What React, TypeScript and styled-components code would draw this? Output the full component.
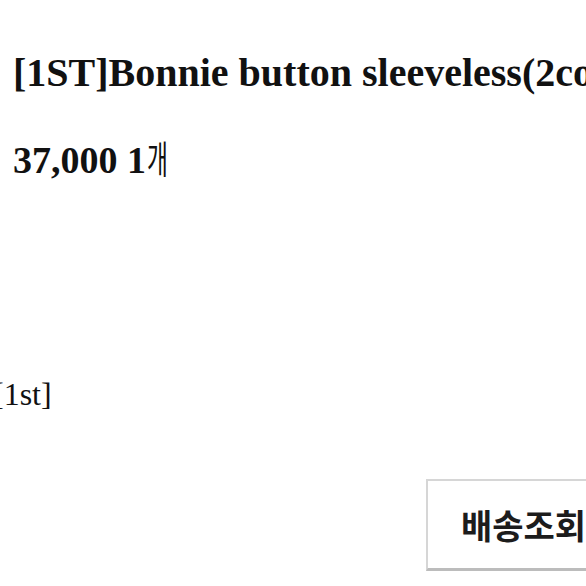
import React from 'react';
import styled, { createGlobalStyle } from 'styled-components';

const GlobalStyle = createGlobalStyle`
  html, body {
    margin: 0;
    padding: 0;
    background: #ffffff;
    overflow: hidden;
  }
`;

const Page = styled.div`
  width: 586px;
  height: 586px;
  overflow: hidden;
  display: flex;
  flex-direction: column;
  color: #111111;
  font-family: 'Liberation Serif', 'Noto Sans CJK KR', serif;
`;

const ProductName = styled.div`
  margin: 50px 0 0 13px;
  font-size: 40px;
  font-weight: 700;
  line-height: 46px;
  white-space: nowrap;
`;

const PriceLine = styled.div`
  margin: 42px 0 0 13px;
  font-size: 38px;
  font-weight: 700;
  line-height: 44px;
  white-space: nowrap;
`;

// the counter glyph is set narrow, like a myeongjo face
const Unit = styled.span`
  display: inline-block;
  margin-left: 1px;
  font-family: 'Noto Sans CJK KR', sans-serif;
  font-weight: 400;
  font-size: 38px;
  line-height: 1;
  color: #111111;
  transform: scaleX(0.6);
  transform-origin: left center;
`;

const OptionText = styled.div`
  margin: 194px 0 0 -7px;
  font-size: 32px;
  font-weight: 400;
  line-height: 36px;
  white-space: nowrap;
`;

const Footer = styled.div`
  margin-top: 67px;
  display: flex;
  justify-content: flex-end;
`;

const TrackButton = styled.button`
  margin-right: -40px;
  width: 200px;
  height: 92px;
  box-sizing: border-box;
  padding: 0 0 0 33px;
  text-align: left;
  background: #ffffff;
  border: 2px solid #d6d6d6;
  border-bottom: 3px solid #bcbcbc;
  font-family: 'Noto Sans CJK KR', sans-serif;
  font-size: 34px;
  font-weight: 700;
  color: #1c1c1c;
  white-space: nowrap;
`;

export default function App() {
  return (
    <>
      <GlobalStyle />
      <Page>
        <ProductName>[1ST]Bonnie button sleeveless(2color)</ProductName>
        <PriceLine>
          37,000 1<Unit>개</Unit>
        </PriceLine>
        <OptionText>[1st]</OptionText>
        <Footer>
          <TrackButton>배송조회</TrackButton>
        </Footer>
      </Page>
    </>
  );
}
